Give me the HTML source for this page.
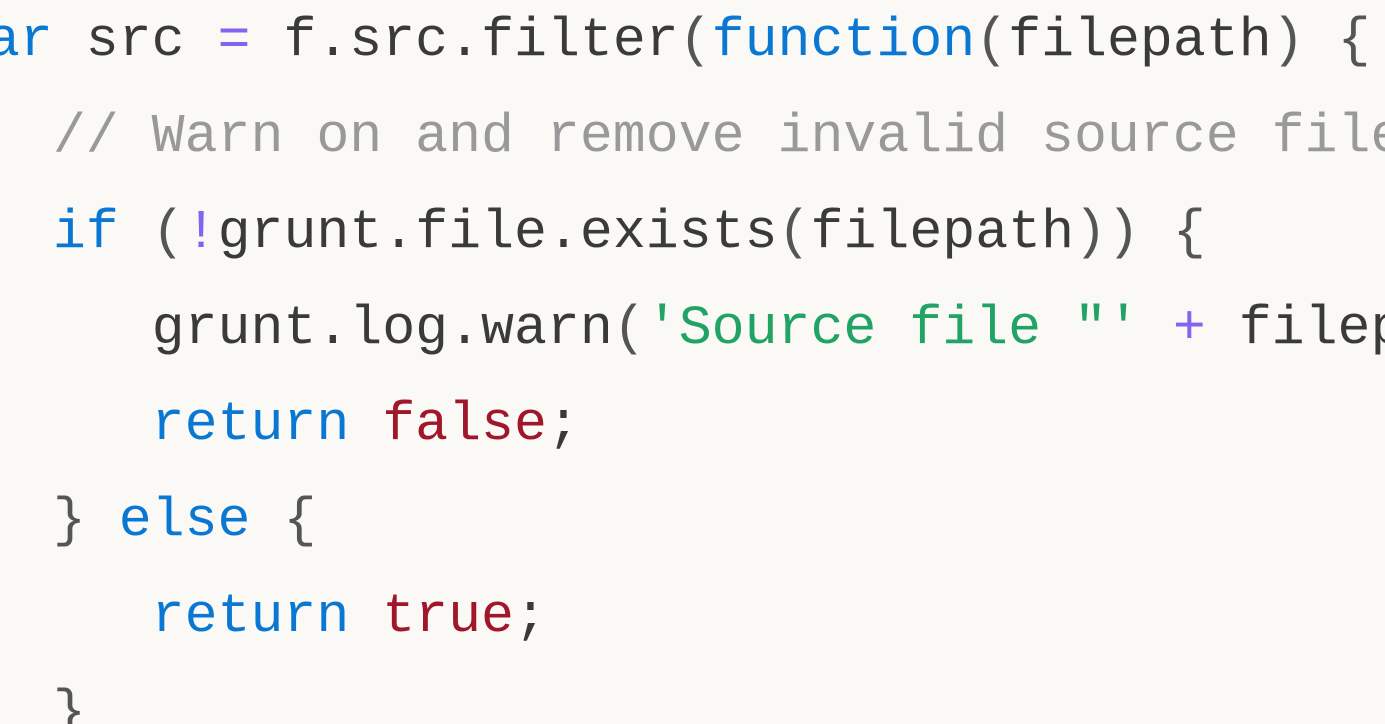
<!DOCTYPE html>
<html><head><meta charset="utf-8"><style>
html,body{margin:0;padding:0;width:1385px;height:724px;overflow:hidden;background:#faf9f5;}
#w{position:relative;width:1385px;height:724px;overflow:hidden;}
pre{position:absolute;left:-46px;top:-7px;margin:0;font-family:"Liberation Mono",monospace;font-size:54.9px;line-height:96px;color:#3a3a3a;white-space:pre;}
.k{color:#0a78d2}.c{color:#999}.s{color:#21a366}.o{color:#8264f0}.b{color:#a0162a}.p{color:#555}
</style></head><body><div id="w">
<pre><span class="k">var</span> src <span class="o">=</span> f.src.filter<span class="p">(</span><span class="k">function</span><span class="p">(</span>filepath<span class="p">)</span> <span class="p">{</span>
   <span class="c">// Warn on and remove invalid source files</span>
   <span class="k">if</span> <span class="p">(</span><span class="o">!</span>grunt.file.exists<span class="p">(</span>filepath<span class="p">))</span> <span class="p">{</span>
      grunt.log.warn<span class="p">(</span><span class="s">'Source file "'</span> <span class="o">+</span> filepath
      <span class="k">return</span> <span class="b">false</span>;
   <span class="p">}</span> <span class="k">else</span> <span class="p">{</span>
      <span class="k">return</span> <span class="b">true</span>;
   <span class="p">}</span></pre>
</div></body></html>
